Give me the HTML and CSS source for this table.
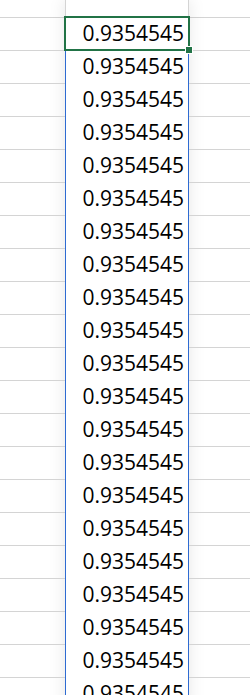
FILE: index.html
```html
<!DOCTYPE html>
<html>
<head>
<meta charset="utf-8">
<link rel="stylesheet" href="styles.css">
</head>
<body>
<div class="sheet">
  <div class="side first" style="grid-row:1"></div>
  <div class="side first right" style="grid-row:1"></div>
  <div class="col">
    <div class="col-top"></div>
    <div class="cell selected">0.9354545<span class="handle"></span></div>
    <div class="cell">0.9354545</div>
    <div class="cell">0.9354545</div>
    <div class="cell">0.9354545</div>
    <div class="cell">0.9354545</div>
    <div class="cell">0.9354545</div>
    <div class="cell">0.9354545</div>
    <div class="cell">0.9354545</div>
    <div class="cell">0.9354545</div>
    <div class="cell">0.9354545</div>
    <div class="cell">0.9354545</div>
    <div class="cell">0.9354545</div>
    <div class="cell">0.9354545</div>
    <div class="cell">0.9354545</div>
    <div class="cell">0.9354545</div>
    <div class="cell">0.9354545</div>
    <div class="cell">0.9354545</div>
    <div class="cell">0.9354545</div>
    <div class="cell">0.9354545</div>
    <div class="cell">0.9354545</div>
    <div class="cell">0.9354545</div>
    <div class="cell">0.9354545</div>
  </div>
  <div class="side"></div><div class="side right"></div>
  <div class="side"></div><div class="side right"></div>
  <div class="side"></div><div class="side right"></div>
  <div class="side"></div><div class="side right"></div>
  <div class="side"></div><div class="side right"></div>
  <div class="side"></div><div class="side right"></div>
  <div class="side"></div><div class="side right"></div>
  <div class="side"></div><div class="side right"></div>
  <div class="side"></div><div class="side right"></div>
  <div class="side"></div><div class="side right"></div>
  <div class="side"></div><div class="side right"></div>
  <div class="side"></div><div class="side right"></div>
  <div class="side"></div><div class="side right"></div>
  <div class="side"></div><div class="side right"></div>
  <div class="side"></div><div class="side right"></div>
  <div class="side"></div><div class="side right"></div>
  <div class="side"></div><div class="side right"></div>
  <div class="side"></div><div class="side right"></div>
  <div class="side"></div><div class="side right"></div>
  <div class="side"></div><div class="side right"></div>
  <div class="side"></div><div class="side right"></div>
</div>
</body>
</html>
```

FILE: styles.css
```css
html, body {
  margin: 0;
  padding: 0;
  background: #ffffff;
  overflow: hidden;
}
body {
  width: 250px;
  height: 695px;
}
.sheet {
  display: grid;
  grid-template-columns: 65px 124px 1fr;
  grid-template-rows: 18px repeat(21, 33px);
  grid-auto-flow: row dense;
}
.side {
  grid-column: 1;
  box-sizing: border-box;
  border-bottom: 1px solid #d4d4d4;
}
.side.right {
  grid-column: 3;
}
.col {
  grid-column: 2;
  grid-row: 1 / -1;
  display: flex;
  flex-direction: column;
  background: #ffffff;
  box-shadow: 0 0 16px rgba(0, 0, 0, 0.10);
  font-family: "Open Sans", "Noto Sans", sans-serif;
  font-size: 21px;
  color: #000000;
}
.col-top {
  height: 16px;
  flex: none;
  box-sizing: border-box;
  border-left: 1px solid #d4d4d4;
  border-right: 1px solid #d4d4d4;
}
.cell {
  flex: none;
  box-sizing: border-box;
  height: 33px;
  line-height: 33px;
  text-align: right;
  padding-right: 4px;
  border-left: 1px solid #2e6bd2;
  border-right: 1px solid #2e6bd2;
  white-space: nowrap;
}
.cell.selected {
  position: relative;
  z-index: 1;
  height: 35px;
  line-height: 31px;
  margin: 0 -1px -1px -1px;
  border: 2px solid #217346;
  background: #ffffff;
}
.handle {
  position: absolute;
  right: -5px;
  bottom: -5px;
  width: 6px;
  height: 6px;
  background: #217346;
  border: 1px solid #ffffff;
}
```
